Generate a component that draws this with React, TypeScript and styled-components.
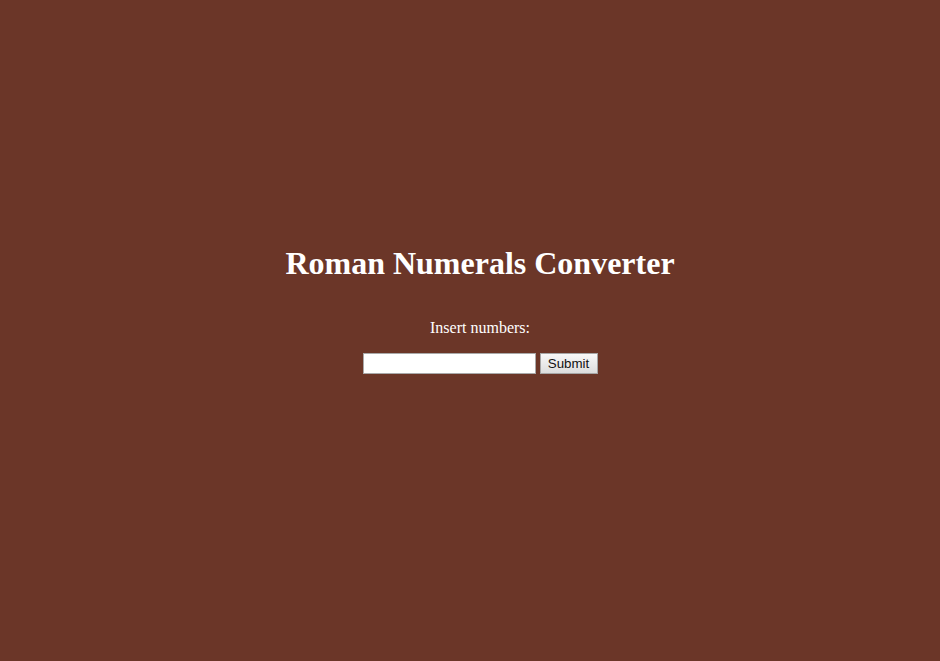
import React from "react";
import styled, { createGlobalStyle } from "styled-components";

const Global = createGlobalStyle`
  html, body { margin: 0; padding: 0; }
  body {
    background: #6b3628;
    font-family: "Liberation Serif", "Times New Roman", serif;
    color: #ffffff;
  }
`;

const Page = styled.main`
  min-height: 100vh;
  box-sizing: border-box;
  padding: 245px 0 0 20px;
  display: flex;
  flex-direction: column;
  align-items: center;
  text-align: center;
`;

const Title = styled.h1`
  margin: 0;
  font-size: 32px;
  font-weight: bold;
  line-height: 37px;
`;

const Form = styled.form`
  margin-top: 37px;
  display: flex;
  flex-direction: column;
  align-items: center;
`;

const Label = styled.label`
  font-size: 16px;
  line-height: 18px;
  margin-bottom: 16px;
`;

const Row = styled.div`
  display: flex;
  align-items: center;
  gap: 4px;
`;

const Input = styled.input`
  box-sizing: border-box;
  width: 173px;
  height: 21px;
  border: 1px solid #a9a9a9;
  background: #fff;
  padding: 1px 2px;
  font-family: "Liberation Sans", Arial, sans-serif;
  font-size: 13.33px;
  outline: none;
`;

const Button = styled.button`
  box-sizing: border-box;
  width: 58px;
  height: 21px;
  border: 1px solid #a6a6a6;
  background: linear-gradient(#f8f8f8, #dddddd);
  color: #111;
  font-family: "Liberation Sans", Arial, sans-serif;
  font-size: 13.33px;
  padding: 0 6px;
`;

export default function App() {
  return (
    <>
      <Global />
      <Page>
        <Title>Roman Numerals Converter</Title>
        <Form onSubmit={(e) => e.preventDefault()}>
          <Label htmlFor="num">Insert numbers:</Label>
          <Row>
            <Input id="num" type="text" />
            <Button type="submit">Submit</Button>
          </Row>
        </Form>
      </Page>
    </>
  );
}
